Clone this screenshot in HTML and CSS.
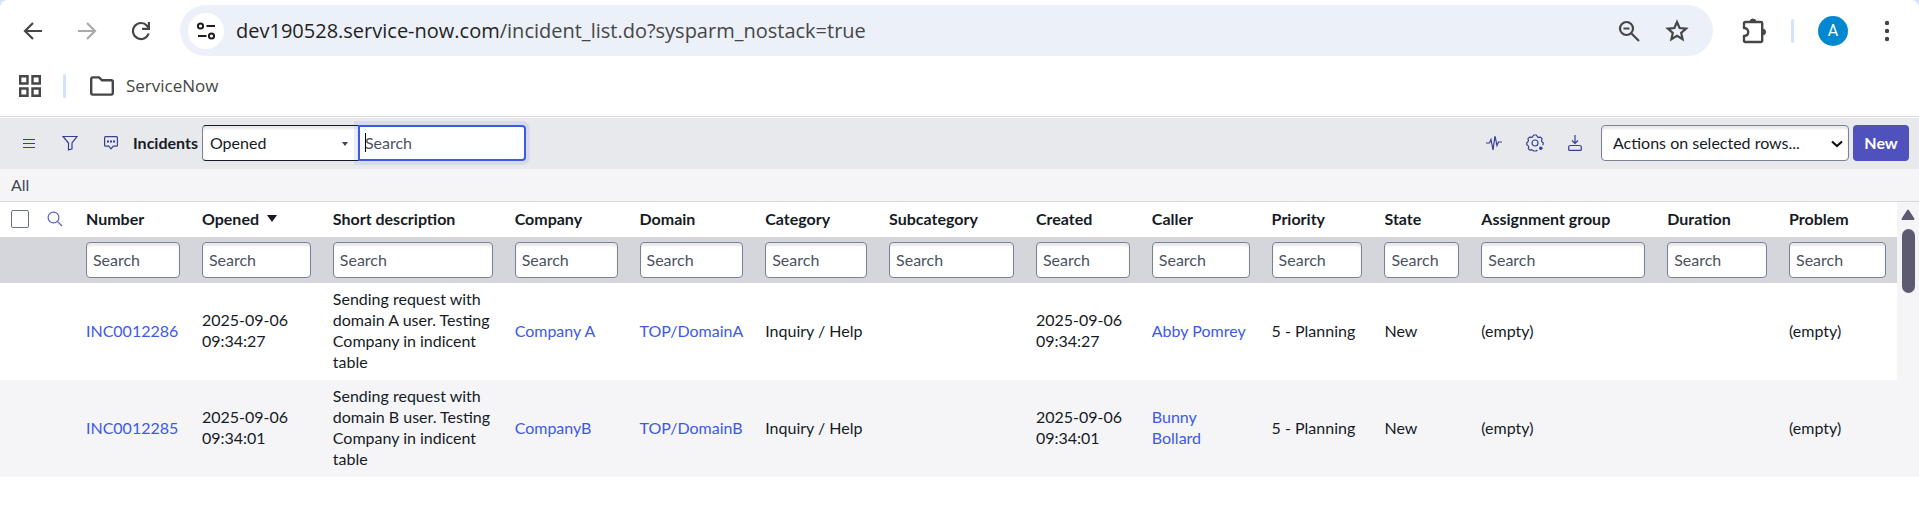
FILE: index.html
```html
<!DOCTYPE html>
<html lang="en">
<head>
<meta charset="utf-8">
<title>Incidents | ServiceNow</title>
<link rel="stylesheet" href="styles.css">
</head>
<body>
<header class="browser">
  <div class="browser-bar">
    <nav class="nav-buttons">
      <button class="icon-btn" aria-label="Back"><svg width="20" height="20" viewBox="0 0 20 20"><path d="M19 10H2.500M10 2 2 10l8 8" fill="none" stroke="#454746" stroke-width="2.200"/></svg></button>
      <button class="icon-btn" aria-label="Forward" disabled><svg width="20" height="20" viewBox="0 0 20 20"><path d="M1 10h16.500M10 2l8 8-8 8" fill="none" stroke="#a9aaaa" stroke-width="2.200"/></svg></button>
      <button class="icon-btn" aria-label="Reload"><svg width="20" height="20" viewBox="0 0 20 20"><path d="M17.600 12.500A8 8 0 1 1 16 4.700L18 7" fill="none" stroke="#454746" stroke-width="2.200"/><path d="M19 1v8h-8V6.800h5.800V1z" fill="#454746"/></svg></button>
    </nav>
    <div class="omnibox">
      <button class="site-info" aria-label="View site information"><svg width="20" height="20" viewBox="0 0 20 20"><g fill="none" stroke="#1f1f1f" stroke-width="2"><circle cx="4.500" cy="5" r="2.600"/><path d="M10.500 5H19M2 15h8.500"/><circle cx="15.500" cy="15" r="2.600"/></g></svg></button>
      <div class="url" role="textbox" aria-label="Address"><span class="host">dev190528.service-now.com</span>/incident_list.do?sysparm_nostack=true</div>
      <button class="icon-btn" aria-label="Zoom"><svg width="22" height="22" viewBox="0 0 22 22"><g fill="none" stroke="#454746" stroke-width="2.200"><circle cx="8.500" cy="8.500" r="6.500"/><path d="m13.200 13.200 7.800 7.800M5.500 8.500h6"/></g></svg></button>
      <button class="icon-btn" aria-label="Bookmark this tab"><svg width="24" height="24" viewBox="0 0 24 24"><path d="m12 3 2.600 6 6.500.6-4.900 4.300 1.400 6.400-5.600-3.400-5.600 3.400 1.400-6.400L2.900 9.600 9.400 9z" fill="none" stroke="#454746" stroke-width="2.200"/></svg></button>
    </div>
    <div class="browser-tools">
      <button class="icon-btn" aria-label="Extensions"><svg width="26" height="26" viewBox="0 0 26 26"><path d="M3 5.200c0-.8.500-1.200 1.200-1.200H20c.800 0 1.200.5 1.200 1.200v17.600c0 .8-.4 1.200-1.200 1.200H4.200c-.7 0-1.200-.4-1.200-1.200V18c2.500 0 4.200-1.700 4.200-4S5.500 10 3 10z" fill="none" stroke="#454746" stroke-width="2.400" stroke-linejoin="round"/><path d="M9 4a3 3 0 0 1 6 0zM21.500 11a3 3 0 0 1 0 6z" fill="#454746" stroke="#454746"/></svg></button>
      <span class="divider"></span>
      <button class="avatar" aria-label="Profile">A</button>
      <button class="icon-btn" aria-label="Menu"><svg width="6" height="22" viewBox="0 0 6 22" fill="#454746"><circle cx="3" cy="3" r="2.200"/><circle cx="3" cy="11" r="2.200"/><circle cx="3" cy="19" r="2.200"/></svg></button>
    </div>
  </div>
  <div class="bookmarks">
    <button class="icon-btn" aria-label="Apps"><svg width="22" height="22" viewBox="0 0 22 22"><path d="M1.200 1.200h7.300v7.300H1.200zM13.500 1.200h7.300v7.300h-7.300zM1.200 13.500h7.300v7.300H1.200zM13.500 13.500h7.300v7.300h-7.300z" fill="none" stroke="#454746" stroke-width="2.400"/></svg></button>
    <span class="divider"></span>
    <a class="bookmark" href="#"><svg width="24" height="20" viewBox="0 0 24 20"><path d="M1.200 17V3c0-.9.600-1.600 1.600-1.600h6.300L12 4.300h9.200c1 0 1.600.7 1.600 1.600V17c0 .9-.6 1.600-1.600 1.600H2.800c-1 0-1.600-.7-1.600-1.600z" fill="none" stroke="#454746" stroke-width="2.400"/></svg><span>ServiceNow</span></a>
  </div>
</header>
<main>
  <div class="toolbar">
    <div class="toolbar-icons">
      <button class="icon-btn" aria-label="List menu"><svg width="14" height="14" viewBox="0 0 14 14"><path d="M1 3.500h12M1 7.500h12M1 11.500h12" stroke="#3a3d94" stroke-width="1.200"/></svg></button>
      <button class="icon-btn" aria-label="Filter"><svg width="16" height="16" viewBox="0 0 16 16"><path d="M1 1.500h14L10 8v5.800L6.500 15V8z" fill="none" stroke="#3a3d94" stroke-width="1.200"/></svg></button>
      <button class="icon-btn" aria-label="Activity stream"><svg width="14" height="14" viewBox="0 0 14 14"><path d="M1.500.6h11c.6 0 .9.300.9.900v7.800c0 .6-.3.900-.9.900H9.300L7 12.800l-2.300-2.600H1.500c-.6 0-.9-.3-.9-.9V1.500c0-.6.300-.9.900-.9z" fill="none" stroke="#3a3d94" stroke-width="1.200"/><path d="M3 4.500h2v2H3zM6 4.500h2v2H6zM9 4.500h2v2H9z" fill="#3a3d94"/></svg></button>
    </div>
    <h1 class="list-title">Incidents</h1>
    <div class="search-group">
      <div class="select-wrap">
        <select class="control field-select" aria-label="Search field"><option>Opened</option></select>
        <svg class="field-caret" width="6" height="4" viewBox="0 0 6 4"><path d="M0 0h6L3 4z" fill="#3b4354"/></svg>
      </div>
      <div class="list-search">
        <input class="control focused" type="text" placeholder="Search" aria-label="Search incidents">
        <span class="text-caret"></span>
      </div>
    </div>
    <div class="actions">
      <div class="action-icons">
        <button class="icon-btn" aria-label="Response time"><svg width="16" height="16" viewBox="0 0 16 16"><path d="M0 8h3.500l1.500-3.500L7 15 9 1l2 9.500L12.500 7H16" fill="none" stroke="#3a3d94" stroke-width="1.200"/></svg></button>
        <button class="icon-btn" aria-label="Personalize list"><svg width="18" height="18" viewBox="0 0 18 18"><path d="M16.900 11.200 17.300 9l-1.400-1.400-.3-1L16 4.700l-1.600-1.600-1.900.3-1-.5L10.300 1H7.700L6.500 2.900l-1 .5-1.900-.3L2 4.700l.4 1.900-.3 1L.7 9l.1 1.700 1.500 1.200.4 1-.4 1.700 1.500 1.500 1.900-.4 1 .5L7.900 17h2.400l1-1.200" fill="none" stroke="#3a3d94" stroke-width="1.200" stroke-linejoin="round"/><circle cx="9" cy="9" r="3" fill="none" stroke="#3a3d94" stroke-width="1.200"/><circle cx="14.800" cy="14.200" r="1.800" fill="#3a3d94"/></svg></button>
        <button class="icon-btn" aria-label="Export"><svg width="14" height="16" viewBox="0 0 14 16"><path d="M7 0v8.500M4 5.500l3 3 3-3M3.500 10.500h-1c-1 0-1.800.7-1.800 1.700v2.200c0 .6.300 1 .9 1h10.800c.6 0 .9-.4.9-1v-2.200c0-1-.8-1.700-1.800-1.700z" fill="none" stroke="#3a3d94" stroke-width="1.200"/></svg></button>
      </div>
      <div class="select-wrap">
        <select class="control action-select" aria-label="Actions"><option>Actions on selected rows...</option></select>
        <svg class="action-caret" width="12" height="8" viewBox="0 0 12 8"><path d="m1 1.500 5 4.500 5-4.500" fill="none" stroke="#111" stroke-width="2.200"/></svg>
      </div>
      <button class="new-btn">New</button>
    </div>
  </div>
  <nav class="breadcrumb"><a href="#">All</a></nav>
  <div class="list">
    <table class="incidents">
      <colgroup>
        <col class="w-check"><col class="w-find"><col class="w-number"><col class="w-opened"><col class="w-short"><col class="w-company"><col class="w-domain"><col class="w-category"><col class="w-subcategory"><col class="w-created"><col class="w-caller"><col class="w-priority"><col class="w-state"><col class="w-group"><col class="w-duration"><col class="w-problem">
      </colgroup>
      <thead>
        <tr class="head-row">
          <td><input class="check" type="checkbox" aria-label="Select all"></td>
          <td class="find"><button class="icon-btn" aria-label="Toggle column search"><svg width="16" height="16" viewBox="0 0 16 16"><g fill="none" stroke="#5b5ec4" stroke-width="1.200"><circle cx="6.500" cy="6.500" r="5.400"/><path d="m10.400 10.400 4.600 4.600"/></g></svg></button></td>
          <th>Number</th>
          <th><span class="sorted">Opened<svg width="10" height="7" viewBox="0 0 10 7"><path d="M0 0h10L5 7z" fill="#161b26"/></svg></span></th>
          <th>Short description</th><th>Company</th><th>Domain</th><th>Category</th><th>Subcategory</th><th>Created</th><th>Caller</th><th>Priority</th><th>State</th><th>Assignment group</th><th>Duration</th><th>Problem</th>
        </tr>
        <tr class="filter-row">
          <td></td><td></td>
          <td><input class="control" type="text" placeholder="Search" aria-label="Number"></td>
          <td><input class="control" type="text" placeholder="Search" aria-label="Opened"></td>
          <td><input class="control" type="text" placeholder="Search" aria-label="Short description"></td>
          <td><input class="control" type="text" placeholder="Search" aria-label="Company"></td>
          <td><input class="control" type="text" placeholder="Search" aria-label="Domain"></td>
          <td><input class="control" type="text" placeholder="Search" aria-label="Category"></td>
          <td><input class="control" type="text" placeholder="Search" aria-label="Subcategory"></td>
          <td><input class="control" type="text" placeholder="Search" aria-label="Created"></td>
          <td><input class="control" type="text" placeholder="Search" aria-label="Caller"></td>
          <td><input class="control" type="text" placeholder="Search" aria-label="Priority"></td>
          <td><input class="control" type="text" placeholder="Search" aria-label="State"></td>
          <td><input class="control" type="text" placeholder="Search" aria-label="Assignment group"></td>
          <td><input class="control" type="text" placeholder="Search" aria-label="Duration"></td>
          <td><input class="control" type="text" placeholder="Search" aria-label="Problem"></td>
        </tr>
      </thead>
      <tbody>
        <tr>
          <td></td><td></td><td><a href="#">INC0012286</a></td><td>2025-09-06 09:34:27</td><td>Sending request with domain A user. Testing Company in indicent table</td><td><a href="#">Company A</a></td><td class="nowrap"><a href="#">TOP/DomainA</a></td><td>Inquiry / Help</td><td></td><td>2025-09-06 09:34:27</td><td><a href="#">Abby Pomrey</a></td><td>5 - Planning</td><td>New</td><td>(empty)</td><td></td><td>(empty)</td>
        </tr>
        <tr>
          <td></td><td></td><td><a href="#">INC0012285</a></td><td>2025-09-06 09:34:01</td><td>Sending request with domain B user. Testing Company in indicent table</td><td><a href="#">CompanyB</a></td><td class="nowrap"><a href="#">TOP/DomainB</a></td><td>Inquiry / Help</td><td></td><td>2025-09-06 09:34:01</td><td><a href="#">Bunny Bollard</a></td><td>5 - Planning</td><td>New</td><td>(empty)</td><td></td><td>(empty)</td>
        </tr>
      </tbody>
    </table>
    <div class="scrollbar" aria-hidden="true">
      <svg width="14" height="11" viewBox="0 0 14 11"><path d="M7 1.500 12.500 10h-11z" fill="#5d5b6f" stroke="#5d5b6f" stroke-width="2" stroke-linejoin="round"/></svg>
      <div class="thumb"></div>
    </div>
  </div>
</main>
</body>
</html>
```

FILE: styles.css
```css
* { box-sizing: border-box; }

body {
  margin: 0;
  background: #fff;
  color: #161b26;
  font: 16px/21px Lato, sans-serif;
}

a { color: #3c59e7; text-decoration: none; }

button, input, select { font: inherit; color: inherit; margin: 0; }

svg { display: block; flex: none; }

.icon-btn {
  display: flex;
  padding: 0;
  border: 0;
  background: none;
}

/* Browser frame */
.browser {
  border-bottom: 1px solid #dcdde0;
  margin-bottom: 1px;
  background: #d3e3fd;
  font-family: "Open Sans", "Noto Sans", sans-serif;
  color: #454746;
}

.browser-bar {
  display: flex;
  align-items: center;
  padding: 5px 29px 5px 23px;
  border-radius: 8px 8px 0 0;
  background: #fff;
}

.nav-buttons { display: flex; gap: 34px; margin-right: 29px; }

.omnibox {
  flex: 1;
  display: flex;
  align-items: center;
  gap: 25px;
  height: 51px;
  padding: 0 24px 0 8px;
  border-radius: 26px;
  background: #ecf0f9;
}

.site-info {
  display: grid;
  place-items: center;
  width: 36px;
  height: 36px;
  margin-right: -13px;
  padding: 0;
  border: 0;
  border-radius: 50%;
  background: #fff;
}

.url { flex: 1; font-size: 20px; line-height: 28px; white-space: nowrap; }
.host { color: #1f1f1f; }

.browser-tools { display: flex; align-items: center; gap: 24px; margin-left: 28px; }

.browser-tools .icon-btn:last-child { margin-left: 12px; }

.divider { width: 3px; height: 24px; border-radius: 2px; background: #d3e3fd; }

.avatar {
  width: 30px;
  height: 30px;
  padding: 0;
  border: 0;
  border-radius: 50%;
  background: #0288d1;
  color: #fff;
  font: 16px/30px Roboto, sans-serif;
}

.bookmarks {
  display: flex;
  align-items: center;
  gap: 22px;
  height: 55px;
  padding: 0 19px 6px;
  background: #fff;
}

.bookmark {
  display: flex;
  align-items: center;
  gap: 12px;
  margin-left: 2px;
  color: #454746;
  font-size: 17px;
}

/* List toolbar */
.toolbar {
  display: flex;
  align-items: center;
  gap: 4px;
  padding: 7px 10px 8px 22px;
  background: #e8e9ed;
}

.toolbar-icons { display: flex; align-items: center; gap: 26px; margin-right: 11px; }

.list-title { margin: 0; padding-bottom: 2px; font-size: 16px; line-height: 21px; }

.search-group { display: flex; }

.control {
  display: block;
  width: 100%;
  height: 36px;
  padding: 0 6px 2px;
  border: 1px solid #7b8291;
  border-radius: 4px;
  background: #fff;
  box-shadow: inset 0 3px 2px #e8e9ea;
  outline: 0;
}

.control::placeholder { color: #4b5262; opacity: 1; }

.select-wrap { position: relative; }

select.control { appearance: none; }

.field-select {
  width: 156px;
  padding-left: 7px;
  border-color: #161b26;
  border-left-color: #7b8291;
  border-right: 0;
  border-radius: 4px 0 0 4px;
}

.field-caret { position: absolute; right: 10px; top: 17px; pointer-events: none; }

.list-search { position: relative; width: 168px; }

.focused {
  padding: 0 5px 2px;
  border: 2px solid #3c59e7;
  border-radius: 0 4px 4px 0;
  box-shadow: 0 0 0 4px rgba(60, 89, 231, 0.1);
}

.text-caret {
  position: absolute;
  left: 7px;
  top: 8px;
  width: 1px;
  height: 19px;
  background: #000;
}

.actions { display: flex; align-items: center; gap: 4px; margin-left: auto; }

.action-icons { display: flex; align-items: center; gap: 24px; margin-right: 15px; }

.action-select { width: 248px; padding-left: 11px; }

.action-caret { position: absolute; right: 6px; top: 15px; pointer-events: none; }

.new-btn {
  min-width: 56px;
  height: 36px;
  padding: 0 8px 2px;
  border: 0;
  border-radius: 4px;
  background: #4f52bd;
  color: #fff;
  font-weight: 700;
}

.breadcrumb {
  padding: 5px 11px 6px;
  border-bottom: 1px solid #d5d7dd;
  background: #f5f5f8;
}

.breadcrumb a { color: #3f4656; }

/* Incident table */
.list { display: flex; }

.incidents {
  flex: 1;
  min-width: 0;
  border-collapse: collapse;
  table-layout: fixed;
}

.w-check { width: 40px; }
.w-find { width: 35px; }
.w-number { width: 116px; }
.w-opened { width: 131px; }
.w-short { width: 182px; }
.w-company { width: 125px; }
.w-domain { width: 124px; }
.w-category { width: 124px; }
.w-subcategory { width: 147px; }
.w-created { width: 116px; }
.w-caller { width: 120px; }
.w-priority { width: 113px; }
.w-state { width: 97px; }
.w-group { width: 186px; }
.w-duration { width: 122px; }
.w-problem { width: 119px; }

.incidents th, .incidents td {
  padding: 5px 11px 8px;
  text-align: left;
  vertical-align: middle;
}

.incidents .head-row > * { padding-top: 6px; padding-bottom: 8px; white-space: nowrap; }

.incidents .head-row .find { padding-left: 7px; padding-right: 0; }

.filter-row { background: #d5d6dc; }

.incidents .filter-row td { padding-top: 5px; padding-bottom: 5px; }

.incidents tbody tr:nth-child(even) { background: #f5f5f8; }

.nowrap { white-space: nowrap; }

.check {
  display: block;
  appearance: none;
  width: 18px;
  height: 18px;
  border: 1px solid #6b7282;
  border-radius: 2px;
  background: #fff;
}

.sorted { display: flex; align-items: center; gap: 8px; }

.scrollbar {
  display: flex;
  flex-direction: column;
  align-items: center;
  gap: 9px;
  width: 22px;
  padding-top: 7px;
  background: #f5f5f8;
}

.thumb { width: 13px; height: 64px; border-radius: 7px; background: #5d5b6f; }
```
